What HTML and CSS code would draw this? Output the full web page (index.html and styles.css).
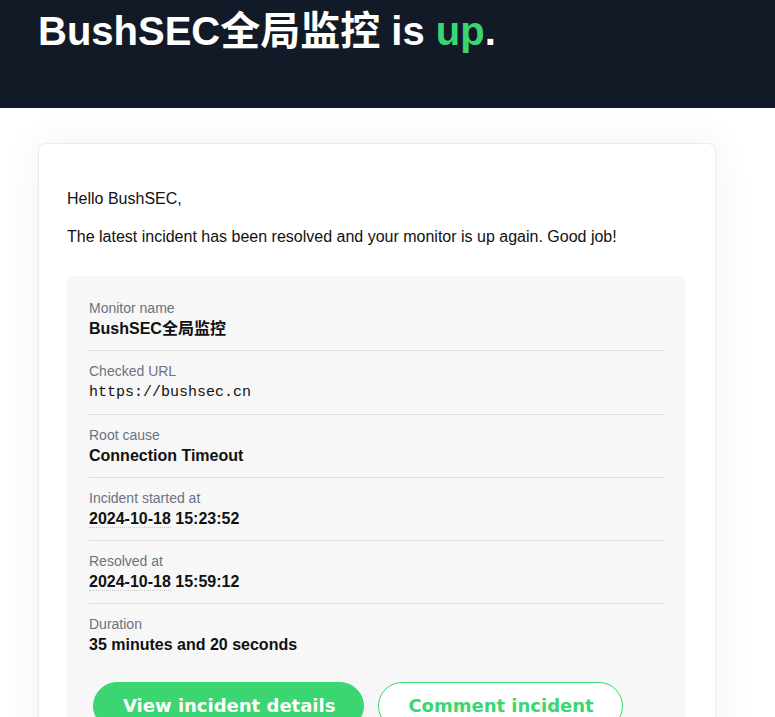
FILE: index.html
```html
<!DOCTYPE html>
<html lang="zh-CN">
<head>
<meta charset="utf-8">
<title>BushSEC全局监控 is up.</title>
<link rel="stylesheet" href="styles.css">
</head>
<body>
<header class="hero">
  <h1 class="hero-title">BushSEC全局监控 is <span class="up">up</span>.</h1>
</header>
<main class="card">
  <p class="text">Hello BushSEC,</p>
  <p class="text last">The latest incident has been resolved and your monitor is up again. Good job!</p>
  <section class="details">
    <div class="row">
      <div class="label">Monitor name</div>
      <div class="value">BushSEC全局监控</div>
    </div>
    <div class="row">
      <div class="label">Checked URL</div>
      <div class="value mono">https://bushsec.cn</div>
    </div>
    <div class="row">
      <div class="label">Root cause</div>
      <div class="value">Connection Timeout</div>
    </div>
    <div class="row">
      <div class="label">Incident started at</div>
      <div class="value"><span class="date">2024-10-18</span> 15:23:52</div>
    </div>
    <div class="row">
      <div class="label">Resolved at</div>
      <div class="value"><span class="date">2024-10-18</span> 15:59:12</div>
    </div>
    <div class="row noline">
      <div class="label">Duration</div>
      <div class="value">35 minutes and 20 seconds</div>
    </div>
    <div class="actions">
      <a class="btn btn-primary" href="#">View incident details</a>
      <a class="btn btn-outline" href="#">Comment incident</a>
    </div>
  </section>
</main>
</body>
</html>
```

FILE: styles.css
```css
html, body {
  margin: 0;
  padding: 0;
  background: #ffffff;
  font-family: "Liberation Sans", Arial, "Noto Sans CJK SC", sans-serif;
  color: #111111;
}

.hero {
  background: #131a27;
  height: 108px;
  padding: 0 38px;
  box-sizing: border-box;
}

.hero-title {
  margin: 0;
  padding-top: 8px;
  font-size: 40px;
  line-height: 46px;
  font-weight: 700;
  color: #ffffff;
  font-family: "Liberation Sans", Arial, "Noto Sans CJK SC", sans-serif;
}

.up {
  color: #3bd671;
}

.card {
  display: block;
  margin: 35px 0 0 38px;
  width: 678px;
  box-sizing: border-box;
  padding: 44px 29px 40px 28px;
  background: #ffffff;
  border: 1px solid #ececec;
  border-radius: 8px;
  box-shadow: 0 0 40px rgba(0, 0, 0, 0.06);
}

.text {
  margin: 0 0 16px 0;
  font-size: 16px;
  line-height: 22px;
  color: #111111;
}

.text.last {
  margin-bottom: 28px;
}

.details {
  background: #f7f7f7;
  border-radius: 8px;
  padding: 22px 22px 30px 22px;
}

.row {
  padding: 10px 0 10px 0;
  border-bottom: 1px solid #dedede;
}

.row:first-child {
  padding-top: 0;
}

.row.noline {
  border-bottom: none;
}

.label {
  font-size: 14px;
  line-height: 20px;
  color: #6b7280;
}

.value {
  font-size: 16px;
  line-height: 22px;
  font-weight: 700;
  color: #111111;
}

.value.mono {
  font-family: "Liberation Mono", "Courier New", monospace;
  font-weight: 400;
  font-size: 15px;
  line-height: 23px;
}

.date {
  border-bottom: 1px dotted #c8c8c8;
}

.actions {
  display: flex;
  gap: 14px;
  margin-top: 16px;
  padding-left: 4px;
}

.btn {
  display: inline-block;
  font-family: "DejaVu Sans", Verdana, sans-serif;
  font-weight: 700;
  font-size: 18px;
  line-height: 24px;
  text-decoration: none;
  border-radius: 999px;
  padding: 11px 28px 11px 29px;
  border: 1px solid #3bd671;
}

.btn-primary {
  background: #3bd671;
  color: #ffffff;
}

.btn-outline {
  background: #ffffff;
  color: #3bd671;
}
```
